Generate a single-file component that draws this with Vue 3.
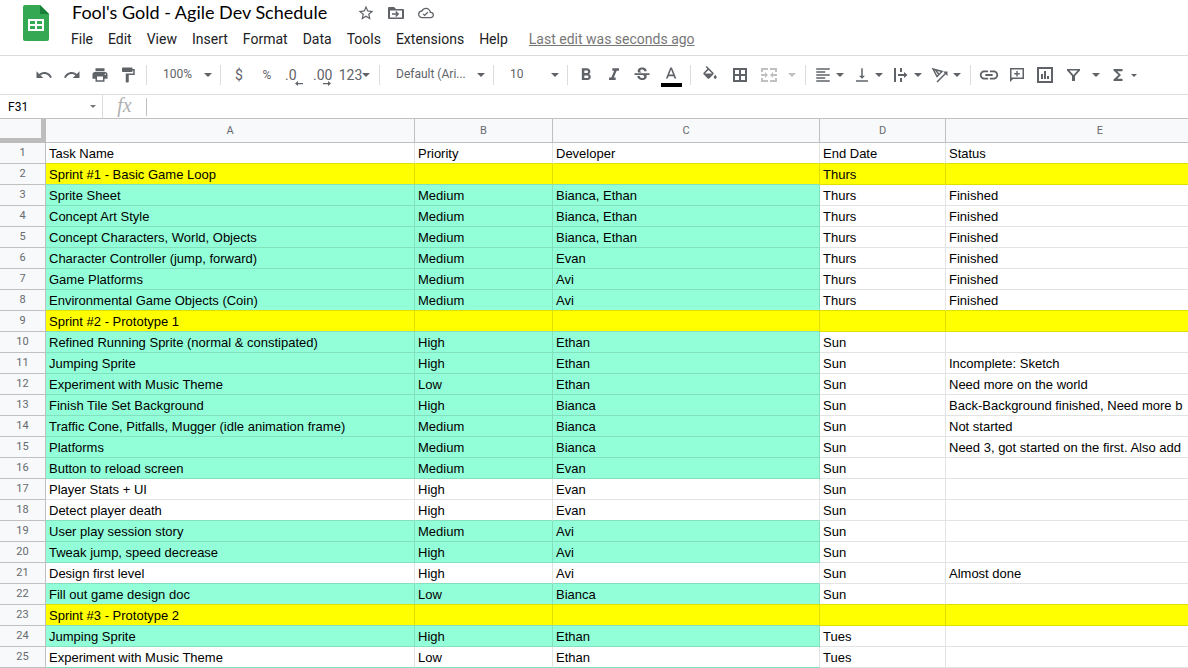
<script setup>
const menus = ['File', 'Edit', 'View', 'Insert', 'Format', 'Data', 'Tools', 'Extensions', 'Help']

const icons = {
  undo: 'M12.5 8c-2.65 0-5.05.99-6.9 2.6L2 7v9h9l-3.62-3.62c1.39-1.16 3.16-1.88 5.12-1.88 3.54 0 6.55 2.31 7.6 5.5l2.37-.78C21.08 11.03 17.15 8 12.5 8z',
  redo: 'M18.4 10.6C16.55 8.99 14.15 8 11.5 8c-4.65 0-8.58 3.03-9.96 7.22L3.9 16c1.05-3.19 4.05-5.5 7.6-5.5 1.95 0 3.73.72 5.12 1.88L13 16h9V7l-3.6 3.6z',
  print: 'M19 8H5c-1.66 0-3 1.34-3 3v6h4v4h12v-4h4v-6c0-1.66-1.34-3-3-3zm-3 11H8v-5h8v5zm3-7c-.55 0-1-.45-1-1s.45-1 1-1 1 .45 1 1-.45 1-1 1zm-1-9H6v4h12V3z',
  paint: 'M18 4V3c0-.55-.45-1-1-1H5c-.55 0-1 .45-1 1v4c0 .55.45 1 1 1h12c.55 0 1-.45 1-1V6h1v4H9v11c0 .55.45 1 1 1h2c.55 0 1-.45 1-1v-9h8V4h-3z',
  bold: 'M15.6 10.79c.97-.67 1.65-1.77 1.65-2.79 0-2.26-1.75-4-4-4H7v14h7.04c2.09 0 3.71-1.7 3.71-3.79 0-1.52-.86-2.82-2.15-3.42zM10 6.5h3c.83 0 1.5.67 1.5 1.5s-.67 1.5-1.5 1.5h-3v-3zm3.5 9H10v-3h3.5c.83 0 1.5.67 1.5 1.5s-.67 1.5-1.5 1.5z',
  italic: 'M10 4v3h2.21l-3.42 8H6v3h8v-3h-2.21l3.42-8H18V4z',
  strike: 'M7.24 8.75c-.26-.48-.39-1.03-.39-1.67 0-.61.13-1.16.4-1.67.26-.5.63-.93 1.11-1.29.48-.35 1.05-.63 1.7-.83.66-.19 1.39-.29 2.18-.29.81 0 1.54.11 2.21.34.66.22 1.23.54 1.69.94.47.4.83.88 1.08 1.43.25.55.38 1.15.38 1.81h-3.01c0-.31-.05-.59-.15-.85-.09-.27-.24-.49-.44-.68-.2-.19-.45-.33-.75-.44-.3-.1-.66-.16-1.06-.16-.39 0-.74.04-1.03.13-.29.09-.53.21-.72.36-.19.16-.34.34-.44.55-.1.21-.15.43-.15.66 0 .48.25.88.74 1.21.38.25.77.48 1.41.7H7.39c-.05-.08-.11-.17-.15-.25zM21 12v-2H3v2h9.62c.18.07.4.14.55.2.37.17.66.34.87.51.21.17.35.36.43.57.07.2.11.43.11.69 0 .23-.05.45-.14.66-.09.2-.23.38-.42.53-.19.15-.42.26-.71.35-.29.08-.63.13-1.01.13-.43 0-.83-.04-1.18-.13s-.66-.23-.91-.42c-.25-.19-.45-.44-.59-.75-.14-.31-.25-.76-.25-1.21H6.4c0 .55.08 1.13.24 1.58.16.45.37.85.65 1.21.28.35.6.66.98.92.37.26.78.48 1.22.65.44.17.9.3 1.38.39.48.08.96.13 1.44.13.8 0 1.53-.09 2.18-.28s1.21-.45 1.67-.79c.46-.34.82-.77 1.07-1.27s.38-1.07.38-1.71c0-.6-.1-1.14-.31-1.61-.05-.11-.11-.23-.17-.33H21z',
  textColor: 'M11 3L5.5 17h2.25l1.12-3h6.25l1.12 3h2.25L13 3h-2zm-1.38 9L12 5.67 14.38 12H9.62z',
  fill: 'M16.56 8.94L7.62 0 6.21 1.41l2.38 2.38-5.15 5.15c-.59.59-.59 1.54 0 2.12l5.5 5.5c.29.29.68.44 1.06.44s.77-.15 1.06-.44l5.5-5.5c.59-.58.59-1.53 0-2.12zM5.21 10L10 5.21 14.79 10H5.21zM19 11.5s-2 2.17-2 3.5c0 1.1.9 2 2 2s2-.9 2-2c0-1.33-2-3.5-2-3.5z',
  align: 'M15 15H3v2h12v-2zm0-8H3v2h12V7zM3 13h18v-2H3v2zm0 8h18v-2H3v2zM3 3v2h18V3H3z',
  valign: 'M16 13h-3V3h-2v10H8l4 4 4-4zM4 19v2h16v-2H4z',
  link: 'M3.9 12c0-1.71 1.39-3.1 3.1-3.1h4V7H7c-2.76 0-5 2.24-5 5s2.24 5 5 5h4v-1.9H7c-1.71 0-3.1-1.39-3.1-3.1zM8 13h8v-2H8v2zm9-6h-4v1.9h4c1.71 0 3.1 1.39 3.1 3.1s-1.39 3.1-3.1 3.1h-4V17h4c2.76 0 5-2.24 5-5s-2.24-5-5-5z',
  sigma: 'M18 4H6v2l6.5 6L6 18v2h12v-3h-7l5-5-5-5h7z',
  star: 'M22 9.24l-7.19-.62L12 2 9.19 8.63 2 9.24l5.46 4.73L5.82 21 12 17.27 18.18 21l-1.63-7.03L22 9.24zM12 15.4l-3.76 2.27 1-4.28-3.32-2.88 4.38-.38L12 6.1l1.71 4.04 4.38.38-3.32 2.88 1 4.28L12 15.4z',
  cloud: 'M19.35 10.04C18.67 6.59 15.64 4 12 4 9.11 4 6.6 5.64 5.35 8.04 2.34 8.36 0 10.91 0 14c0 3.31 2.69 6 6 6h13c2.76 0 5-2.24 5-5 0-2.64-2.05-4.78-4.65-4.96zM19 18H6c-2.21 0-4-1.79-4-4 0-2.05 1.53-3.76 3.56-3.97l1.07-.11.5-.95C8.08 7.14 9.94 6 12 6c2.62 0 4.88 1.86 5.39 4.43l.3 1.5 1.53.11c1.56.1 2.78 1.41 2.78 2.96 0 1.65-1.35 3-3 3zm-9-3.82l-1.6-1.6L7 14l3 3 5.5-5.5-1.4-1.4z'
}

const history = [
  { icon: icons.undo, label: 'Undo' },
  { icon: icons.redo, label: 'Redo' },
  { icon: icons.print, label: 'Print' },
  { icon: icons.paint, label: 'Paint format' }
]
const styles = [
  { icon: icons.bold, label: 'Bold' },
  { icon: icons.italic, label: 'Italic' },
  { icon: icons.strike, label: 'Strikethrough' }
]

const columns = ['A', 'B', 'C', 'D', 'E']

const rows = [
  ['w', 'Task Name', 'Priority', 'Developer', 'End Date', 'Status'],
  ['y', 'Sprint #1 - Basic Game Loop', '', '', 'Thurs', ''],
  ['g', 'Sprite Sheet', 'Medium', 'Bianca, Ethan', 'Thurs', 'Finished'],
  ['g', 'Concept Art Style', 'Medium', 'Bianca, Ethan', 'Thurs', 'Finished'],
  ['g', 'Concept Characters, World, Objects', 'Medium', 'Bianca, Ethan', 'Thurs', 'Finished'],
  ['g', 'Character Controller (jump, forward)', 'Medium', 'Evan', 'Thurs', 'Finished'],
  ['g', 'Game Platforms', 'Medium', 'Avi', 'Thurs', 'Finished'],
  ['g', 'Environmental Game Objects (Coin)', 'Medium', 'Avi', 'Thurs', 'Finished'],
  ['y', 'Sprint #2 - Prototype 1', '', '', '', ''],
  ['g', 'Refined Running Sprite (normal & constipated)', 'High', 'Ethan', 'Sun', ''],
  ['g', 'Jumping Sprite', 'High', 'Ethan', 'Sun', 'Incomplete: Sketch'],
  ['g', 'Experiment with Music Theme', 'Low', 'Ethan', 'Sun', 'Need more on the world'],
  ['g', 'Finish Tile Set Background', 'High', 'Bianca', 'Sun', 'Back-Background finished, Need more b'],
  ['g', 'Traffic Cone, Pitfalls, Mugger (idle animation frame)', 'Medium', 'Bianca', 'Sun', 'Not started'],
  ['g', 'Platforms', 'Medium', 'Bianca', 'Sun', 'Need 3, got started on the first. Also add'],
  ['g', 'Button to reload screen', 'Medium', 'Evan', 'Sun', ''],
  ['w', 'Player Stats + UI', 'High', 'Evan', 'Sun', ''],
  ['w', 'Detect player death', 'High', 'Evan', 'Sun', ''],
  ['g', 'User play session story', 'Medium', 'Avi', 'Sun', ''],
  ['g', 'Tweak jump, speed decrease', 'High', 'Avi', 'Sun', ''],
  ['w', 'Design first level', 'High', 'Avi', 'Sun', 'Almost done'],
  ['g', 'Fill out game design doc', 'Low', 'Bianca', 'Sun', ''],
  ['y', 'Sprint #3 - Prototype 2', '', '', '', ''],
  ['g', 'Jumping Sprite', 'High', 'Ethan', 'Tues', ''],
  ['w', 'Experiment with Music Theme', 'Low', 'Ethan', 'Tues', '']
]

const tone = (r, c) => {
  const kind = r < rows.length ? rows[r][0] : 'g'
  return kind === 'g' && c > 2 ? 'w' : kind
}
// A grid line takes the tint of the filled cell that it touches.
const cellClass = (r, c) => {
  const own = tone(r, c)
  const below = tone(r + 1, c)
  return ['bg-' + own, 'line-' + (below !== 'w' ? below : own), 'side-' + own]
}
</script>

<template>
  <div class="app">
    <header class="head">
      <svg class="logo" width="26" height="36" viewBox="0 0 26 36" aria-hidden="true">
        <path fill="#34a853" d="M2 0h15l9 9v25a2 2 0 0 1-2 2H2a2 2 0 0 1-2-2V2a2 2 0 0 1 2-2z" />
        <path fill="#188038" d="M17 0l9 9h-9z" />
        <path fill="#fff" fill-rule="evenodd" d="M5 14h16v12H5zM7 16v3h5v-3zM14 16v3h5v-3zM7 21v3h5v-3zM14 21v3h5v-3z" />
      </svg>
      <div class="titles">
        <div class="title-row">
          <h1>Fool's Gold - Agile Dev Schedule</h1>
          <button class="small" aria-label="Star"><svg width="18" height="18" viewBox="0 0 24 24"><path :d="icons.star" /></svg></button>
          <button class="small" aria-label="Move">
            <svg width="16" height="14" viewBox="0 0 16 14"><path fill-rule="evenodd" d="M1 1h5l2 2h7a1 1 0 0 1 1 1v8a1 1 0 0 1-1 1H1a1 1 0 0 1-1-1V2a1 1 0 0 1 1-1zM2 4.500v7h12v-7zM4 7.300h4.400L7.200 6l1-1 3 3-3 3-1-1 1.200-1.300H4z" /></svg>
          </button>
          <button class="small" aria-label="Document status"><svg width="16" height="16" viewBox="0 0 24 24"><path :d="icons.cloud" /></svg></button>
        </div>
        <nav class="menus">
          <button v-for="m in menus" :key="m">{{ m }}</button>
          <a href="#history">Last edit was seconds ago</a>
        </nav>
      </div>
    </header>

    <div class="toolbar" role="toolbar">
      <button v-for="t in history" :key="t.label" class="tool" :aria-label="t.label">
        <svg width="18" height="18" viewBox="0 0 24 24"><path :d="t.icon" /></svg>
      </button>
      <span class="sep"></span>
      <label class="pick narrow">
        <select aria-label="Zoom"><option>100%</option></select>
        <i class="caret"></i>
      </label>
      <span class="sep"></span>
      <button class="tool" aria-label="Currency">$</button>
      <button class="tool" aria-label="Percent"><span class="light">%</span></button>
      <button class="tool decimals" aria-label="Decrease decimal places">.0
        <svg width="8" height="5" viewBox="0 0 8 5"><path d="M0 2.500 3 0v2h5v1.300H3V5z" /></svg>
      </button>
      <button class="tool decimals" aria-label="Increase decimal places">.00
        <svg width="8" height="5" viewBox="0 0 8 5"><path d="M8 2.500 5 0v2H0v1.300h5V5z" /></svg>
      </button>
      <button class="tool formats" aria-label="More formats">123<i class="caret"></i></button>
      <span class="sep"></span>
      <label class="pick wide">
        <select aria-label="Font"><option>Default (Ari...</option></select>
        <i class="caret"></i>
      </label>
      <span class="sep"></span>
      <label class="pick narrow">
        <select aria-label="Font size"><option>10</option></select>
        <i class="caret"></i>
      </label>
      <span class="sep"></span>
      <button v-for="t in styles" :key="t.label" class="tool" :aria-label="t.label">
        <svg width="20" height="20" viewBox="0 0 24 24"><path :d="t.icon" /></svg>
      </button>
      <button class="tool mid" aria-label="Text color">
        <svg width="22" height="24" viewBox="0 0 22 24">
          <path transform="translate(1.500 2) scale(.8)" :d="icons.textColor" />
          <path fill="#000" d="M1 20h21v4H1z" />
        </svg>
      </button>
      <span class="sep"></span>
      <button class="tool mid" aria-label="Fill color"><svg width="18" height="20" viewBox="0 0 24 24"><path :d="icons.fill" /></svg></button>
      <button class="tool mid" aria-label="Borders">
        <svg width="14" height="14" viewBox="0 0 14 14"><path fill-rule="evenodd" d="M0 0h14v14H0zM2 2v4h4V2zM8 2v4h4V2zM2 8v4h4V8zM8 8v4h4V8z" /></svg>
      </button>
      <button class="tool faded" aria-label="Merge cells" disabled>
        <svg width="16" height="14" viewBox="0 0 16 14">
          <path d="M0 0h7v2H2v2H0zM9 0h7v4h-2V2H9zM0 10h2v2h5v2H0zM14 10h2v4H9v-2h5zM0 6h4V4l3 3-3 3V8H0zM16 6h-4V4L9 7l3 3V8h4z" />
        </svg>
      </button>
      <button class="drop faded" aria-label="Merge options" disabled><i class="caret"></i></button>
      <span class="sep"></span>
      <button class="combo" aria-label="Horizontal align"><svg width="18" height="18" viewBox="0 0 24 24"><path :d="icons.align" /></svg><i class="caret"></i></button>
      <button class="combo" aria-label="Vertical align"><svg width="18" height="18" viewBox="0 0 24 24"><path :d="icons.valign" /></svg><i class="caret"></i></button>
      <button class="combo" aria-label="Text wrapping">
        <svg width="18" height="18" viewBox="0 0 18 18"><path d="M2 2h2v14H2zM8 2h2v4H8zM8 12h2v4H8zM6 8h6V6l3.500 3-3.500 3v-2H6z" /></svg><i class="caret"></i>
      </button>
      <button class="combo" aria-label="Text rotation">
        <svg width="18" height="18" viewBox="0 0 18 18">
          <path fill="none" stroke="currentColor" stroke-width="1.500" d="M2 3l9 2.500-5 5zM4.500 4l3.500 4.500M6 16l9-9" />
          <path d="M16.500 5.500v4.500l-4.500-4.500z" />
        </svg><i class="caret"></i>
      </button>
      <span class="sep"></span>
      <button class="tool" aria-label="Insert link"><svg width="22" height="22" viewBox="0 0 24 24"><path :d="icons.link" /></svg></button>
      <button class="tool" aria-label="Insert comment">
        <svg width="14" height="14" viewBox="0 0 14 14"><path fill-rule="evenodd" d="M0 0h14v11H3l-3 3zM1.500 1.500v8h11v-8zM6.300 3h1.400v2h2v1.400h-2v2H6.300v-2h-2V5h2z" /></svg>
      </button>
      <button class="tool" aria-label="Insert chart">
        <svg width="16" height="16" viewBox="0 0 16 16"><path fill-rule="evenodd" d="M0 0h16v16H0zM2 2v12h12V2zM4 7h2v5H4zM7 4h2v8H7zM10 9h2v3h-2z" /></svg>
      </button>
      <button class="tool" aria-label="Create a filter">
        <svg width="14" height="14" viewBox="0 0 14 14"><path fill-rule="evenodd" d="M1 1h13v1.500L9 8v5H6V8L1 2.500zM3.500 2.500 7.500 7l4-4.500z" /></svg>
      </button>
      <button class="drop" aria-label="Filter views"><i class="caret"></i></button>
      <button class="combo" aria-label="Functions"><svg width="18" height="18" viewBox="0 0 24 24"><path :d="icons.sigma" /></svg><i class="caret tiny"></i></button>
    </div>

    <div class="formula-bar">
      <input class="name-box" aria-label="Name box" value="F31" />
      <button class="name-drop" aria-label="Named ranges"><i class="caret tiny"></i></button>
      <label class="fx" for="formula">fx</label>
      <input id="formula" class="formula" />
    </div>

    <main class="sheet">
      <table>
        <colgroup>
          <col class="col-n" /><col class="col-a" /><col class="col-b" /><col class="col-c" /><col class="col-d" /><col class="col-e" />
        </colgroup>
        <thead>
          <tr>
            <td class="corner"></td>
            <th v-for="c in columns" :key="c" scope="col">{{ c }}</th>
          </tr>
        </thead>
        <tbody>
          <tr v-for="(row, r) in rows" :key="r">
            <th scope="row">{{ r + 1 }}</th>
            <td v-for="(text, c) in row.slice(1)" :key="c" :class="cellClass(r, c)">{{ text }}</td>
          </tr>
        </tbody>
      </table>
    </main>
  </div>
</template>

<style>
body {
  margin: 0;
  background: #fff;
}
</style>

<style scoped>
.app {
  overflow: hidden;
  font-family: Roboto, "Liberation Sans", sans-serif;
  color: #202124;
}
button,
input,
select {
  margin: 0;
  padding: 0;
  border: 0;
  background: none;
  font: inherit;
  color: inherit;
  outline: none;
}
svg {
  display: block;
  flex: none;
  fill: currentColor;
}

.head {
  display: flex;
  height: 55px;
  padding-left: 23px;
}
.logo {
  margin-top: 5px;
}
.titles {
  padding-left: 15px;
}
.title-row {
  display: flex;
  align-items: flex-start;
  height: 26px;
  padding-left: 8px;
  color: #5f6368;
}
h1 {
  margin: 0 24px 0 0;
  font: 400 18px/24px Lato, "Open Sans", sans-serif;
  color: #000;
  white-space: nowrap;
}
.small {
  display: flex;
  align-items: center;
  justify-content: center;
  width: 30px;
  height: 25px;
}
.menus {
  display: flex;
  gap: 15px;
  padding-left: 7px;
  font-size: 14px;
  line-height: 26px;
  white-space: nowrap;
}
.menus a {
  margin-left: 6px;
  color: #777;
}

.toolbar {
  display: flex;
  align-items: center;
  height: 38px;
  padding-left: 30px;
  border-top: 1px solid #dadce0;
  border-bottom: 1px solid #dadce0;
  color: #5f6368;
  font-size: 14px;
  white-space: nowrap;
}
.toolbar > * {
  flex: none;
}
.tool,
.drop {
  display: flex;
  align-items: center;
  justify-content: center;
  width: 28px;
  height: 28px;
}
.tool.mid {
  width: 30px;
}
.drop {
  width: 18px;
}
.light {
  font-size: 12px;
}
.faded {
  color: #c0c0c0;
}
.sep {
  width: 1px;
  height: 20px;
  margin: 0 4px;
  background: #dadce0;
}
.pick {
  position: relative;
  font-size: 12px;
}
.pick select {
  width: 100%;
  height: 28px;
  padding: 0 0 2px 12px;
  appearance: none;
}
.pick .caret {
  position: absolute;
  right: 4px;
  top: 12px;
}
.narrow {
  width: 65px;
}
.wide {
  width: 105px;
}
.caret {
  width: 0;
  height: 0;
  border: 4px solid transparent;
  border-top-color: currentColor;
  border-bottom: 0;
}
.caret.tiny {
  border-width: 3px 3px 0;
}
.tool.decimals {
  position: relative;
  justify-content: flex-start;
  padding-left: 4px;
}
.decimals svg {
  position: absolute;
  right: 6px;
  bottom: 3px;
}
.tool.formats {
  width: 38px;
  padding-right: 3px;
}
.combo {
  display: flex;
  align-items: center;
  gap: 4px;
  width: 39px;
  height: 28px;
  padding-left: 4px;
}

.formula-bar {
  display: flex;
  align-items: center;
  height: 23px;
  font-size: 12px;
}
.name-box {
  width: 78px;
  padding-left: 8px;
  color: #000;
}
.name-drop {
  display: flex;
  justify-content: center;
  width: 17px;
  height: 23px;
  padding-right: 3px;
  align-items: center;
  border-right: 1px solid #dadce0;
  color: #777;
}
.fx {
  width: 43px;
  padding-bottom: 3px;
  text-align: center;
  font: italic 20px/20px "Liberation Serif", serif;
  color: #b0b0b0;
}
.formula {
  flex: 1;
  height: 18px;
  padding-left: 8px;
  border-left: 1px solid #c0c0c0;
}

.sheet {
  overflow: hidden;
  border-top: 1px solid #c0c0c0;
}
table {
  width: 1255px;
  table-layout: fixed;
  border-collapse: separate;
  border-spacing: 0;
}
.col-n { width: 46px; }
.col-a { width: 369px; }
.col-b { width: 138px; }
.col-c { width: 267px; }
.col-d { width: 126px; }
.col-e { width: 309px; }
th,
td {
  box-sizing: border-box;
  height: 21px;
  padding: 0;
  border-right: 1px solid #c0c0c0;
  border-bottom: 1px solid #c0c0c0;
}
th {
  background: #f8f9fa;
  font-size: 11px;
  font-weight: 400;
  line-height: 20px;
  color: #666a70;
  vertical-align: top;
}
thead th {
  height: 24px;
  line-height: 23px;
}
.corner {
  height: 24px;
  background: #f8f9fa;
  border-right: 5px solid #bdbdbd;
  border-bottom: 5px solid #bdbdbd;
}
tbody td {
  padding: 2px 0 0 3px;
  font: 13px/18px "Liberation Sans", Arial, sans-serif;
  color: #000;
  white-space: nowrap;
}
.bg-y { background: #ff0; }
.bg-g { background: #93ffd9; }
.line-w { border-bottom-color: #e2e3e3; }
.line-y { border-bottom-color: #e0e000; }
.line-g { border-bottom-color: #82e0bf; }
.side-w { border-right-color: #e2e3e3; }
.side-y { border-right-color: #e0e000; }
.side-g { border-right-color: #82e0bf; }
</style>
